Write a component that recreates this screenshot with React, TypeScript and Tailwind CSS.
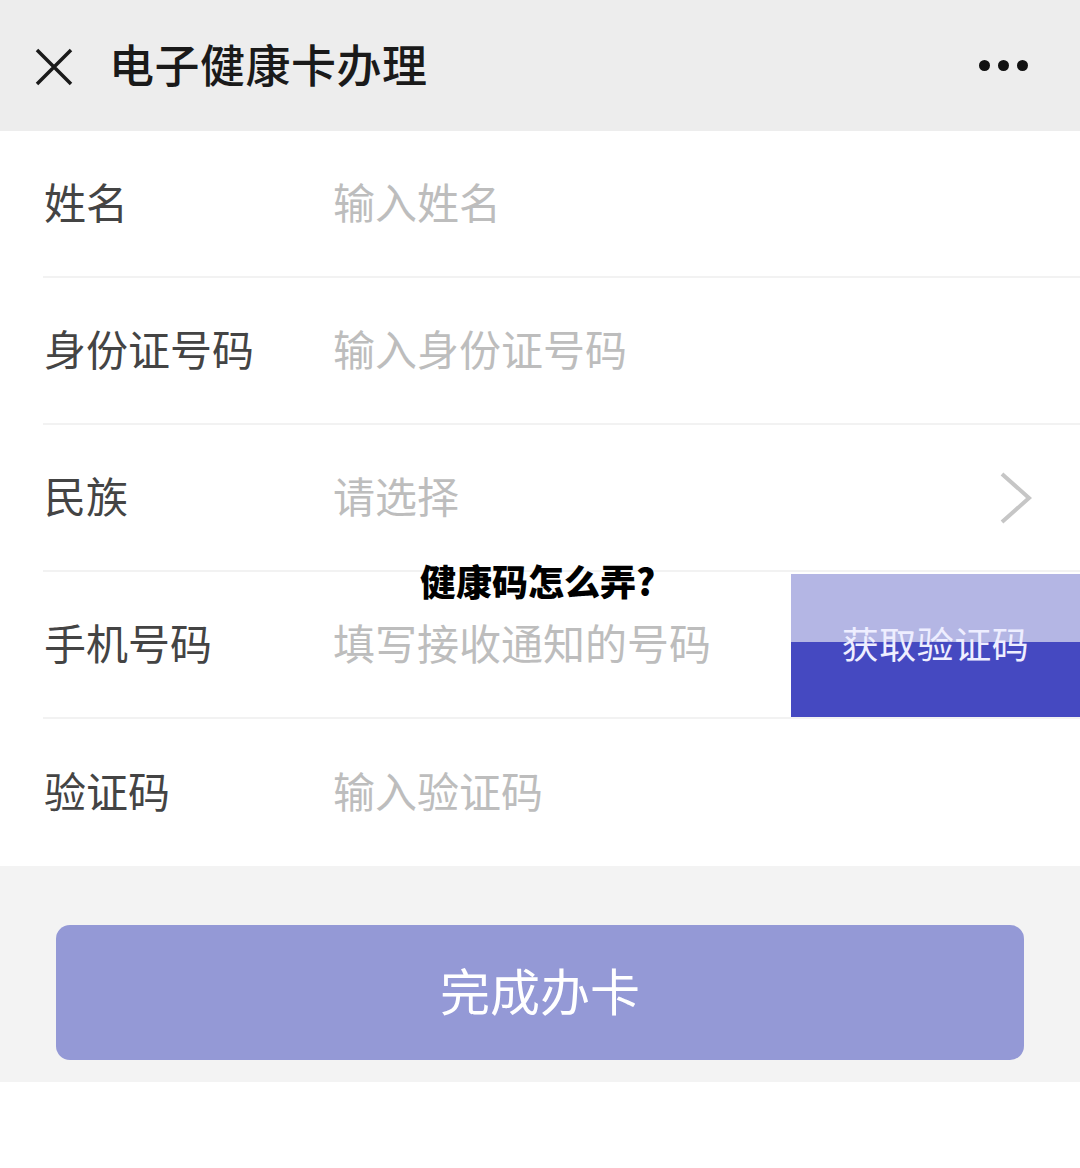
import React from "react";

const font = { fontFamily: '"Noto Sans CJK SC", "Noto Sans", sans-serif' };

function Row({
  label,
  placeholder,
  last,
  right,
}: {
  label: string;
  placeholder: string;
  last?: boolean;
  right?: React.ReactNode;
}) {
  return (
    <div
      className={`ml-[43px] flex h-[147px] items-center ${
        last ? "" : "border-b-2 border-[#f2f2f2]"
      }`}
    >
      <div className="w-[290px] -translate-y-[3px] pl-[1px] text-[42px] leading-none text-[#444]">
        {label}
      </div>
      <div className="flex-1 -translate-y-[3px] text-[42px] leading-none text-[#bdbdbd]">
        {placeholder}
      </div>
      {right}
    </div>
  );
}

export default function App() {
  return (
    <div className="relative h-[1168px] w-[1080px] bg-white" style={font}>
      {/* Header */}
      <header className="flex h-[131px] items-center bg-[#ededed] pl-[35px] pr-[52px]">
        <svg width="38" height="38" viewBox="0 0 38 38" className="mt-[2px]">
          <path d="M2 2 L36 36 M36 2 L2 36" stroke="#1a1a1a" strokeWidth="3.5" fill="none" />
        </svg>
        <h1 className="ml-[36px] -translate-y-[2px] text-[45px] font-medium leading-none tracking-[0.5px] text-[#1a1a1a]">
          电子健康卡办理
        </h1>
        <div className="ml-auto flex gap-[8px]">
          <span className="h-[11px] w-[11px] rounded-full bg-[#111]" />
          <span className="h-[11px] w-[11px] rounded-full bg-[#111]" />
          <span className="h-[11px] w-[11px] rounded-full bg-[#111]" />
        </div>
      </header>

      {/* Form */}
      <section className="bg-white">
        <Row label="姓名" placeholder="输入姓名" />
        <Row label="身份证号码" placeholder="输入身份证号码" />
        <Row
          label="民族"
          placeholder="请选择"
          right={
            <svg width="34" height="54" viewBox="0 0 34 54" className="mr-[47px]">
              <path d="M3 3 L30 27 L3 51" stroke="#c6c6c6" strokeWidth="4" fill="none" />
            </svg>
          }
        />
        <Row
          label="手机号码"
          placeholder="填写接收通知的号码"
          right={
            <button className="relative flex h-[143px] w-[289px] items-center justify-center self-end overflow-hidden">
              <span className="absolute inset-x-0 top-0 h-[68px] bg-[#b4b6e4]" />
              <span className="absolute inset-x-0 bottom-0 h-[75px] bg-[#4549c1]" />
              <span className="relative -translate-y-[2px] text-[37px] leading-none tracking-[0.5px] text-[#eef]">
                获取验证码
              </span>
            </button>
          }
        />
        <Row label="验证码" placeholder="输入验证码" last />
      </section>

      {/* Footer action */}
      <section className="bg-[#f3f3f3] px-[56px] pb-[22px] pt-[59px]">
        <button className="flex h-[135px] w-full items-center justify-center rounded-[14px] bg-[#9499d6] text-[50px] leading-none text-white">
          <span className="-translate-y-[4px]">完成办卡</span>
        </button>
      </section>

      {/* Watermark caption */}
      <div className="absolute left-[420px] top-[562px] text-[36px] font-black leading-none text-black">
        健康码怎么弄?
      </div>
    </div>
  );
}
